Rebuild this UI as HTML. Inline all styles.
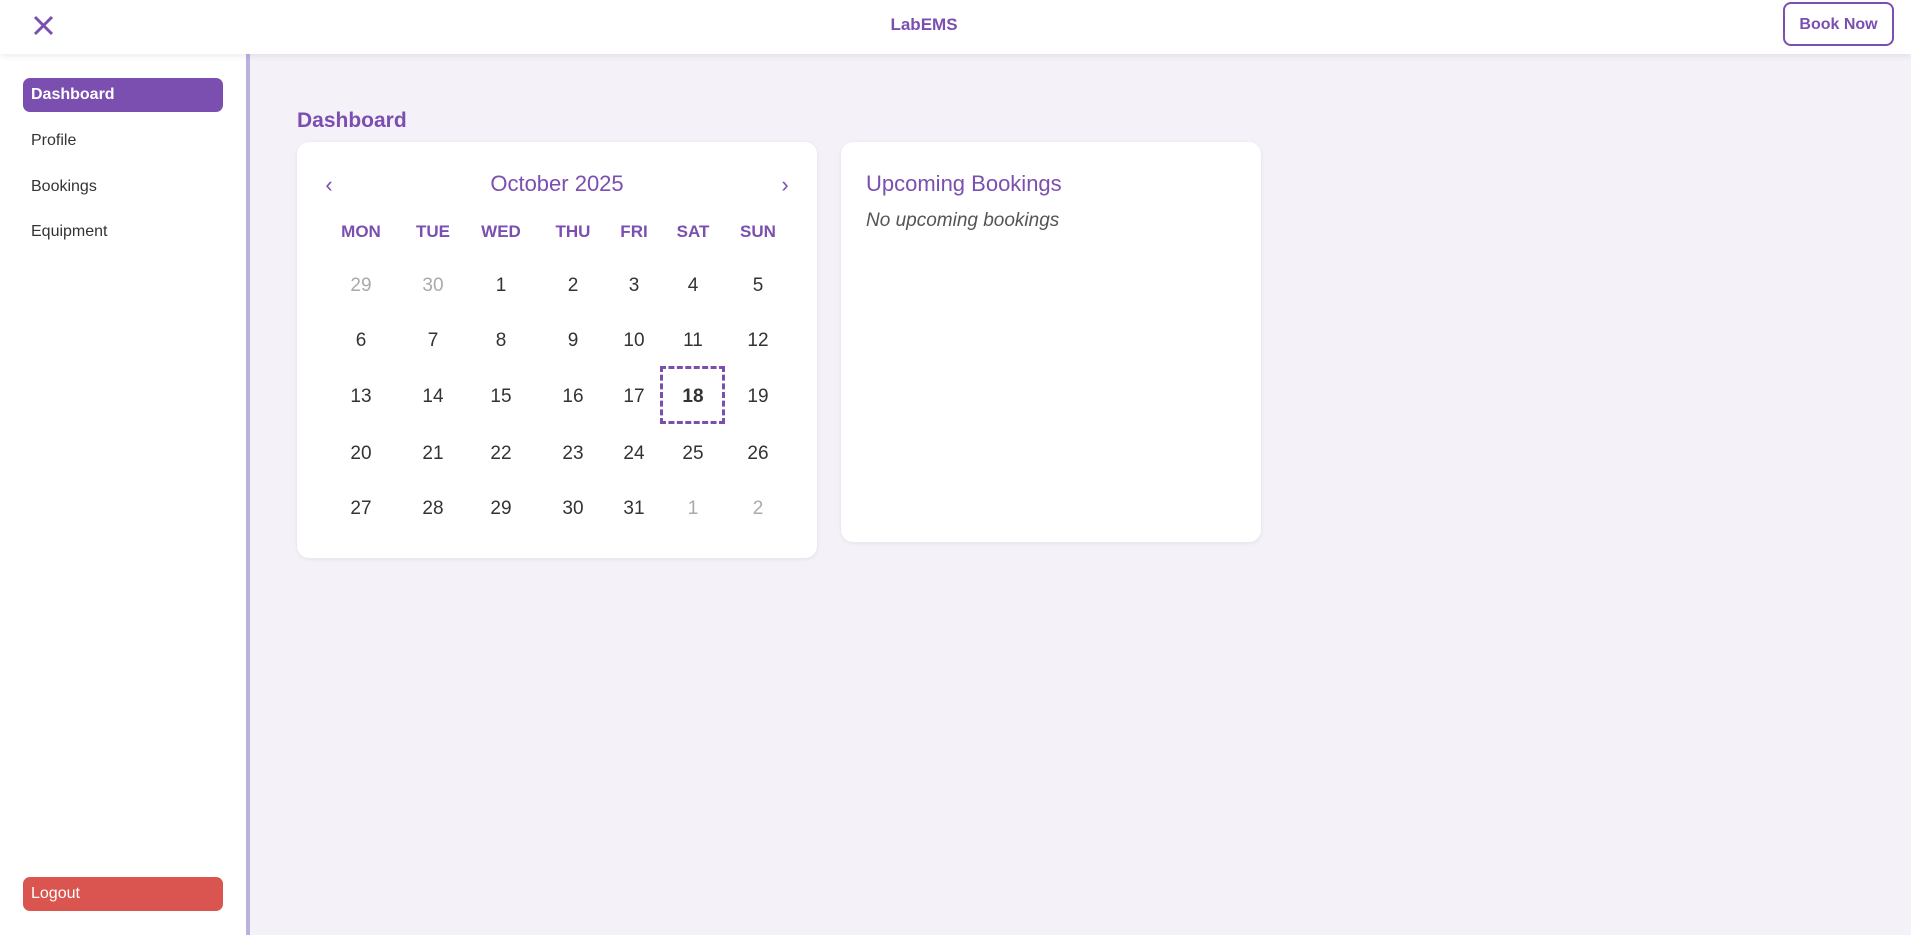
<!DOCTYPE html>
<html><head><style>
*{margin:0;padding:0;box-sizing:border-box}
body{width:1911px;height:935px;overflow:hidden;background:#f4f1f9;font-family:"Liberation Sans",sans-serif;position:relative}
.hdr{position:absolute;left:0;top:0;width:1911px;height:54px;background:#fff;box-shadow:0 2px 6px rgba(0,0,0,.08);z-index:2}
.side{position:absolute;left:0;top:54px;width:250px;height:881px;background:#fff;border-right:4px solid #bcb0dd}
.nav{position:absolute;left:23px;width:200px;height:34px;border-radius:7px;font-size:16px;color:#333;padding-left:8px;line-height:34px}
.card{position:absolute;background:#fff;border-radius:12px;box-shadow:0 1px 4px rgba(0,0,0,.08)}
.t{position:absolute;transform:translate(-50%,-50%);font-size:19px;color:#333}
.w{position:absolute;transform:translate(-50%,-50%);font-size:17px;font-weight:bold;color:#7b4fb0}
</style></head><body>
<div class="hdr">
<svg style="position:absolute;left:33px;top:15px" width="21" height="21" viewBox="0 0 21 21"><path d="M2 2L19 19M19 2L2 19" stroke="#7b4fb0" stroke-width="3"/></svg>
<div style="position:absolute;left:0;width:1848px;top:15px;text-align:center;font-weight:bold;font-size:17px;color:#7b4fb0">LabEMS</div>
<div style="position:absolute;left:1783px;top:2px;width:111px;height:44px;border:2px solid #7b4fb0;border-radius:8px;color:#7b4fb0;font-size:16px;font-weight:bold;text-align:center;line-height:42px">Book Now</div>
</div>
<div class="side">
<div class="nav" style="top:24px;background:#7b4fb0;color:#fff;font-weight:bold">Dashboard</div>
<div class="nav" style="top:70px">Profile</div>
<div class="nav" style="top:116px">Bookings</div>
<div class="nav" style="top:161px">Equipment</div>
<div class="nav" style="top:823px;background:#da5550;color:#fff">Logout</div>
</div>
<div style="position:absolute;left:297px;top:109px;font-size:21px;font-weight:bold;color:#7b4fb0">Dashboard</div>
<div class="card" style="left:297px;top:142px;width:520px;height:416px"></div>
<div class="card" style="left:841px;top:142px;width:420px;height:400px"></div>
<div style="position:absolute;left:866px;top:171px;font-size:22px;color:#7b4fb0">Upcoming Bookings</div>
<div style="position:absolute;left:866px;top:210px;font-size:19px;font-style:italic;color:#555">No upcoming bookings</div>
<div class="t" style="left:329px;top:185px;color:#7b4fb0;font-size:22px">‹</div>
<div class="t" style="left:785px;top:185px;color:#7b4fb0;font-size:22px">›</div>
<div class="t" style="left:557px;top:184px;color:#7b4fb0;font-size:22px;white-space:nowrap">October 2025</div>
<div style="position:absolute;left:660px;top:366px;width:65px;height:58px;border:3px dashed #7b4fb0"></div>
<div id="g"></div>
<script>
var xs=[361,433,501,573,634,693,758],ys=[286,341,397,454,509];
var h='';["MON","TUE","WED","THU","FRI","SAT","SUN"].forEach((d,i)=>h+='<div class="w" style="left:'+xs[i]+'px;top:232px">'+d+'</div>');
var days=[29,30];for(var i=1;i<=31;i++)days.push(i);days.push(1,2);
days.forEach((d,k)=>{var r=Math.floor(k/7),c=k%7;var st='left:'+xs[c]+'px;top:'+ys[r]+'px;';if(k<2||k>32)st+='color:#aaa;';if(k==19)st+='font-weight:bold;';h+='<div class="t" style="'+st+'">'+d+'</div>';});
document.getElementById('g').innerHTML=h;
</script>
</body></html>
